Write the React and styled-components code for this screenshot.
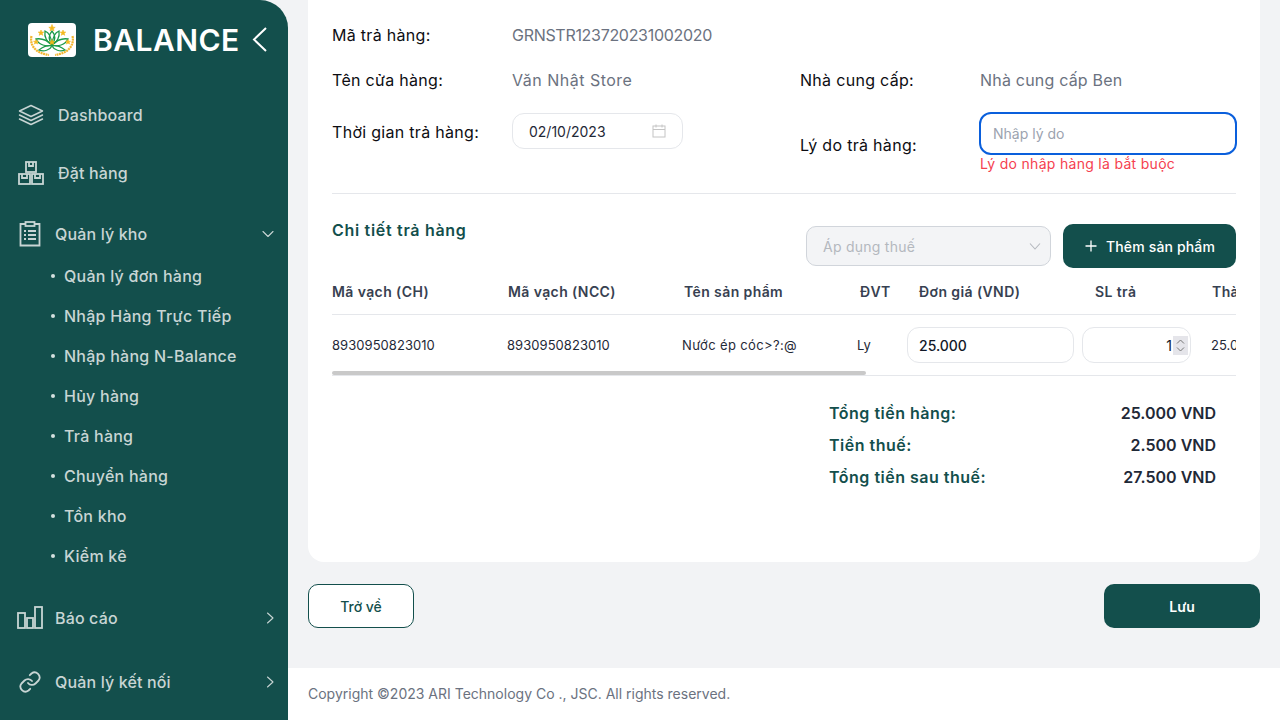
import React from "react";
import styled, { createGlobalStyle } from "styled-components";

const Global = createGlobalStyle`
  html, body { margin: 0; padding: 0; width: 1280px; height: 720px; overflow: hidden; background: #f2f3f5; }
  * { box-sizing: border-box; }
  body { font-family: "Inter", "Noto Sans", sans-serif; }
`;
const green = "#134f4c";
const Page = styled.div`display: flex; width: 1280px; height: 720px; overflow: hidden; background: #f2f3f5;`;
const Sidebar = styled.aside`width: 288px; height: 720px; flex: none; background: ${green}; border-top-right-radius: 28px; color: #c8d5d4; overflow: hidden;`;
const Brand = styled.div`height: 80px; display: flex; align-items: center; padding-left: 28px;`;
const BrandName = styled.div`margin-left: 17px; width: 146px; font-size: 30px; font-weight: 600; color: #fff; letter-spacing: 0.45px; white-space: nowrap;`;
const Collapse = styled.svg`margin-left: 12px; width: 18px; height: 28px;`;
const Nav = styled.nav`padding-top: 6px;`;
const Item = styled.div`
  display: flex; align-items: center; height: ${p => p.$h}px; margin-top: ${p => p.$mt || 0}px;
  padding-left: 18px; font-size: 16px; font-weight: 500; letter-spacing: 0.15px; white-space: nowrap;
`;
const IconBox = styled.span`display: flex; width: ${p => p.$w}px; flex: none; align-items: center;`;
const ItemLabel = styled.span`flex: 1;`;
const Chevron = styled.svg`width: 12px; height: 12px; margin-right: ${p => p.$mr}px; flex: none;`;
const SubList = styled.ul`list-style: none; margin: -4px 0 10px; padding: 0 0 0 64px;`;
const SubItem = styled.li`
  height: 40px; line-height: 40px; font-size: 16px; font-weight: 500; position: relative; letter-spacing: 0.25px; white-space: nowrap;
  &::before { content: ""; position: absolute; left: -13px; top: 18px; width: 4px; height: 4px; border-radius: 50%; background: #d5e0df; }
`;
const Main = styled.main`flex: 1; display: flex; flex-direction: column; min-width: 0;`;
const Content = styled.div`flex: 1; padding: 0 20px;`;
const Card = styled.section`height: 562px; background: #fff; border-radius: 0 0 16px 16px; padding: 12px 24px 0;`;
const InfoRow = styled.div`display: grid; grid-template-columns: 468px 1fr; height: ${p => p.$h}px; align-items: center;`;
const Field = styled.div`display: flex; align-items: center;`;
const FieldTop = styled.div`display: flex; align-self: start; margin-top: ${p => p.$mt}px;`;
const Label = styled.div`width: 180px; flex: none; font-size: 16px; font-weight: 400; letter-spacing: 0.3px; color: #0d0d12; white-space: nowrap; padding-top: ${p => p.$pt || 0}px;`;
const Value = styled.div`font-size: 16px; color: #6b7280; white-space: nowrap; letter-spacing: ${p => p.$ls || 0}px;`;
const DateBox = styled.div`width: 171px; height: 36px; border: 1px solid #e5e7eb; border-radius: 12px; display: flex; align-items: center; justify-content: space-between; padding: 0 16px; font-size: 14px; color: #1f2937;`;
const ReasonCol = styled.div`display: flex; flex-direction: column; margin-left: -1px;`;
const ReasonInput = styled.div`width: 258px; height: 43px; border: 2px solid #0a5fdc; border-radius: 12px; display: flex; align-items: center; padding-left: 12px; font-size: 14px; color: #9ca3af;`;
const ErrorText = styled.div`font-size: 14px; letter-spacing: 0.3px; color: #f5414f; margin: -1px 0 0 1px; line-height: 20px;`;
const Divider = styled.hr`margin: 18px 0 0; border: 0; border-top: 1px solid #e5e7eb;`;
const SectionHead = styled.div`display: flex; align-items: flex-start; height: 74px; padding-top: 30px;`;
const SectionTitle = styled.h2`margin: 0; flex: 1; font-size: 16px; font-weight: 600; letter-spacing: 0.7px; color: ${green}; line-height: 12px;`;
const TaxSelect = styled.div`width: 245px; height: 40px; margin-top: 2px; background: #f3f4f6; border: 1px solid #d1d5db; border-radius: 10px; display: flex; align-items: center; justify-content: space-between; padding: 0 8px 0 16px; font-size: 14px; letter-spacing: 0.25px; color: #b4b8be;`;
const AddButton = styled.div`width: 173px; height: 44px; margin-left: 12px; background: ${green}; color: #fff; border-radius: 10px; display: flex; align-items: center; justify-content: center; gap: 8px; font-size: 14px; font-weight: 500; letter-spacing: 0.15px; white-space: nowrap;`;
const TableWrap = styled.div`overflow: hidden; position: relative; border-bottom: 1px solid #e5e7eb;`;
const HeadRow = styled.div`display: grid; grid-template-columns: 176px 176px 176px 59px 176px 117px 100px; height: 47px; align-items: center; border-bottom: 1px solid #e5e7eb; width: 980px;`;
const HeadCell = styled.div`font-size: 14px; font-weight: 600; letter-spacing: 0.4px; color: #374151; white-space: nowrap;`;
const BodyRow = styled.div`display: grid; grid-template-columns: 175px 175px 175px 50px 175px 129px 100px; height: 60px; align-items: center; width: 980px;`;
const Cell = styled.div`font-size: 13px; color: #1f2937; white-space: nowrap; padding-bottom: 1px; letter-spacing: 0.05px;`;
const NameCell = styled(Cell)`letter-spacing: 0.35px;`;
const PriceInput = styled.div`width: 167px; height: 36px; border: 1px solid #e5e7eb; border-radius: 12px; display: flex; align-items: center; padding-left: 11px; font-size: 14px; font-weight: 500; color: #111827;`;
const QtyInput = styled.div`width: 109px; height: 36px; border: 1px solid #e5e7eb; border-radius: 12px; display: flex; align-items: center; justify-content: flex-end; font-size: 14px; color: #111827; padding-right: 2px;`;
const Spinner = styled.span`width: 15px; height: 19px; margin-left: 1px; background: #e5e5ea; display: flex; align-items: center; justify-content: center;`;
const ScrollThumb = styled.div`position: absolute; left: 0; bottom: 0; width: 534px; height: 4px; border-radius: 2px; background: #c9c9c9;`;
const Totals = styled.div`margin: 21px 20px 0 auto; width: 387px;`;
const TotalRow = styled.div`display: flex; justify-content: space-between; height: 32px; align-items: center; font-size: 16px; font-weight: 600; letter-spacing: 0.5px; color: ${green}; white-space: nowrap;`;
const TotalValue = styled.span`color: #1f2937; letter-spacing: 0;`;
const Actions = styled.div`display: flex; justify-content: space-between; margin-top: 22px;`;
const OutlineBtn = styled.div`width: 106px; height: 44px; border: 1px solid ${green}; border-radius: 10px; background: #fff; color: ${green}; font-size: 14px; font-weight: 500; display: flex; align-items: center; justify-content: center;`;
const SolidBtn = styled.div`width: 156px; height: 44px; border-radius: 10px; background: ${green}; color: #fff; font-size: 14px; font-weight: 600; display: flex; align-items: center; justify-content: center;`;
const Footer = styled.footer`height: 52px; flex: none; background: #fff; display: flex; align-items: center; padding: 0 0 1px 20px; font-size: 14px; color: #6b7280;`;

const Stroke = { fill: "none", stroke: "#c8d5d4", strokeWidth: 1.5, strokeLinejoin: "round", strokeLinecap: "round" };

const LayersIcon = () => (
  <svg width="26" height="22" viewBox="0 0 26 22" {...Stroke}>
    <path d="M13 1.5 24.5 7 13 12.5 1.5 7Z" />
    <path d="M1.500 11 13 16.500 24.500 11" />
    <path d="M1.500 15 13 20.500 24.500 15" />
  </svg>
);
const BoxesIcon = () => (
  <svg width="26" height="24" viewBox="0 0 26 24" {...Stroke} strokeWidth="1.8" strokeLinecap="butt" strokeLinejoin="miter">
    <rect x="8" y="1" width="10" height="10" />
    <path d="M11 1v4h4V1" />
    <rect x="1" y="13" width="11" height="10" />
    <path d="M4 13v4h5v-4" />
    <rect x="14" y="13" width="11" height="10" />
    <path d="M17 13v4h5v-4" />
  </svg>
);
const ClipboardIcon = () => (
  <svg width="22" height="26" viewBox="0 0 22 26" {...Stroke} strokeWidth="1.8" strokeLinecap="butt" strokeLinejoin="miter" style={{ marginLeft: 1 }}>
    <path d="M6 3H1.500v21.500h19V3H16" />
    <rect x="6.500" y="1" width="9" height="4" />
    <path d="M5 10h2M9 10h8M5 14h2M9 14h8M5 18h2M9 18h8" />
  </svg>
);
const ChartIcon = () => (
  <svg width="26" height="24" viewBox="0 0 26 24" {...Stroke} strokeWidth="1.8" strokeLinecap="butt" strokeLinejoin="miter" style={{ marginLeft: -1 }}>
    <rect x="1" y="7" width="7" height="15" />
    <rect x="10" y="12" width="6" height="10" />
    <rect x="18" y="1" width="7" height="21" />
  </svg>
);
const LinkIcon = () => (
  <svg width="24" height="24" viewBox="0 0 24 24" {...Stroke} strokeWidth="1.8">
    <path d="M10 13a5 5 0 0 0 7.500.5l3-3a5 5 0 0 0-7-7l-1.700 1.700" />
    <path d="M14 11a5 5 0 0 0-7.500-.5l-3 3a5 5 0 0 0 7 7l1.700-1.700" />
  </svg>
);
const Right = () => <Chevron $mr={12} viewBox="0 0 12 12" {...Stroke} strokeWidth="1.1"><path d="M3.500 1 9 6l-5.500 5" /></Chevron>;
const Down = () => <Chevron $mr={14} viewBox="0 0 12 12" {...Stroke} strokeWidth="1.1"><path d="M1 3.500 6 8.500l5-5" /></Chevron>;

const Logo = () => (
  <svg width="48" height="34" viewBox="0 0 48 34" style={{ flex: "none" }}>
    <rect width="48" height="34" rx="4" fill="#fff" />
    <g fill="none" stroke="#f2b632" strokeWidth="2.200" strokeDasharray="2 .6">
      <path d="M3.500 13C1.500 22 7 30 21 32" />
      <path d="M44.500 13C46.500 22 41 30 27 32" />
    </g>
    <g fill="none" stroke="#1c9a4a" strokeWidth="1.300">
      <path d="M24 8c3.500 4 3.500 9 0 14-3.500-5-3.500-10 0-14Z" />
      <path d="M17 8c4 1.500 6.500 7 7 14-5-2.500-8-8-7-14ZM31 8c-4 1.500-6.500 7-7 14 5-2.500 8-8 7-14Z" />
      <path d="M8 16c6-1 12 2 16 6-6 2-13 0-16-6ZM40 16c-6-1-12 2-16 6 6 2 13 0 16-6Z" />
      <path d="M11 27c4-3 9-5 13-4-2 4-8 6-13 4ZM37 27c-4-3-9-5-13-4 2 4 8 6 13 4Z" />
    </g>
    <g fill="#f4b81e" stroke="#f4b81e" strokeWidth=".6">
      <path d="M24 1.500 25 4.200l2.200.1-1.800 1.400.6 2.200L24 6.600 22 7.900l.6-2.200-1.800-1.400 2.200-.1Z" />
      <path d="M13 7l.8 2 2 .1-1.600 1.200.6 2-1.800-1.100-1.800 1.100.6-2-1.600-1.200 2-.1Z" />
      <path d="M35 7l.8 2 2 .1-1.600 1.200.6 2-1.800-1.100-1.800 1.100.6-2-1.600-1.200 2-.1Z" />
      <path d="M8 16.500l.7 1.700 1.800.1-1.400 1 .5 1.700L8 20.100 6.400 21l.5-1.700-1.400-1 1.800-.1Z" />
      <path d="M40 16.500l.7 1.700 1.800.1-1.400 1 .5 1.700-1.600-.9-1.600.9.500-1.700-1.400-1 1.800-.1Z" />
      <path d="M24 16.500l.8 1.900 2 .1-1.600 1.200.6 2-1.800-1.100-1.800 1.100.6-2-1.600-1.200 2-.1Z" />
    </g>
  </svg>
);

const subItems = ["Quản lý đơn hàng", "Nhập Hàng Trực Tiếp", "Nhập hàng N-Balance", "Hủy hàng", "Trả hàng", "Chuyển hàng", "Tồn kho", "Kiểm kê"];
const headers = ["Mã vạch (CH)", "Mã vạch (NCC)", "Tên sản phẩm", "ĐVT", "Đơn giá (VND)", "SL trả", "Thành tiền"];

export default function App() {
  return (
    <Page>
      <Global />
      <Sidebar>
        <Brand>
          <Logo />
          <BrandName>BALANCE</BrandName>
          <Collapse viewBox="0 0 18 28" fill="none" stroke="#fff" strokeWidth="2"><path d="M15 2 3 13.500 15 25" /></Collapse>
        </Brand>
        <Nav>
          <Item $h={58}><IconBox $w={40}><LayersIcon /></IconBox><ItemLabel>Dashboard</ItemLabel></Item>
          <Item $h={58}><IconBox $w={40}><BoxesIcon /></IconBox><ItemLabel>Đặt hàng</ItemLabel></Item>
          <Item $h={52} $mt={6}><IconBox $w={37}><ClipboardIcon /></IconBox><ItemLabel>Quản lý kho</ItemLabel><Down /></Item>
          <SubList>{subItems.map(s => <SubItem key={s}>{s}</SubItem>)}</SubList>
          <Item $h={64}><IconBox $w={37}><ChartIcon /></IconBox><ItemLabel>Báo cáo</ItemLabel><Right /></Item>
          <Item $h={64}><IconBox $w={37}><LinkIcon /></IconBox><ItemLabel>Quản lý kết nối</ItemLabel><Right /></Item>
        </Nav>
      </Sidebar>
      <Main>
        <Content>
          <Card>
            <InfoRow $h={46}><Field><Label>Mã trả hàng:</Label><Value $ls={-0.3}>GRNSTR123720231002020</Value></Field></InfoRow>
            <InfoRow $h={44}>
              <Field><Label>Tên cửa hàng:</Label><Value $ls={0.5}>Văn Nhật Store</Value></Field>
              <Field><Label>Nhà cung cấp:</Label><Value $ls={0.2}>Nhà cung cấp Ben</Value></Field>
            </InfoRow>
            <InfoRow $h={73}>
              <FieldTop $mt={11}>
                <Label $pt={9}>Thời gian trả hàng:</Label>
                <DateBox>
                  02/10/2023
                  <svg width="14" height="14" viewBox="0 0 14 14" fill="none" stroke="#c4c4c4" strokeWidth="1"><rect x="1" y="2" width="12" height="11" /><path d="M1 5.500h12M4 .5v3M10 .5v3" /></svg>
                </DateBox>
              </FieldTop>
              <FieldTop $mt={10}>
                <Label $pt={23}>Lý do trả hàng:</Label>
                <ReasonCol>
                  <ReasonInput>Nhập lý do</ReasonInput>
                  <ErrorText>Lý do nhập hàng là bắt buộc</ErrorText>
                </ReasonCol>
              </FieldTop>
            </InfoRow>
            <Divider />
            <SectionHead>
              <SectionTitle>Chi tiết trả hàng</SectionTitle>
              <TaxSelect>
                Áp dụng thuế
                <svg width="14" height="14" viewBox="0 0 14 14" fill="none" stroke="#b4b8be" strokeWidth="1.100"><path d="M2 4.500 7 10l5-5.500" /></svg>
              </TaxSelect>
              <AddButton>
                <svg width="14" height="14" viewBox="0 0 14 14" fill="none" stroke="#fff" strokeWidth="1.300"><path d="M7 1.500v11M1.500 7h11" /></svg>
                Thêm sản phẩm
              </AddButton>
            </SectionHead>
            <TableWrap>
              <HeadRow>{headers.map(h => <HeadCell key={h}>{h}</HeadCell>)}</HeadRow>
              <BodyRow>
                <Cell>8930950823010</Cell>
                <Cell>8930950823010</Cell>
                <NameCell>Nước ép cóc&gt;?:@</NameCell>
                <Cell>Ly</Cell>
                <PriceInput>25.000</PriceInput>
                <QtyInput>
                  1
                  <Spinner>
                    <svg width="9" height="15" viewBox="0 0 9 15" fill="none" stroke="#777" strokeWidth="1"><path d="M1 5.500 4.500 2 8 5.500M1 9.500 4.500 13 8 9.500" /></svg>
                  </Spinner>
                </QtyInput>
                <Cell>25.000</Cell>
              </BodyRow>
              <ScrollThumb />
            </TableWrap>
            <Totals>
              <TotalRow>Tổng tiền hàng:<TotalValue>25.000 VND</TotalValue></TotalRow>
              <TotalRow>Tiền thuế:<TotalValue>2.500 VND</TotalValue></TotalRow>
              <TotalRow>Tổng tiền sau thuế:<TotalValue>27.500 VND</TotalValue></TotalRow>
            </Totals>
          </Card>
          <Actions>
            <OutlineBtn>Trở về</OutlineBtn>
            <SolidBtn>Lưu</SolidBtn>
          </Actions>
        </Content>
        <Footer>Copyright ©2023 ARI Technology Co ., JSC. All rights reserved.</Footer>
      </Main>
    </Page>
  );
}
